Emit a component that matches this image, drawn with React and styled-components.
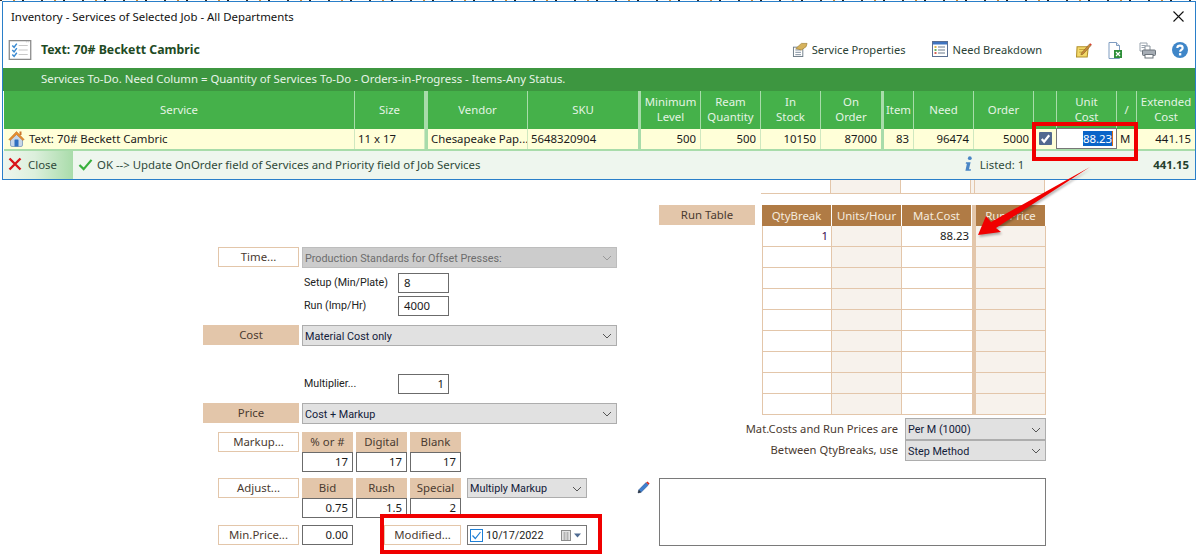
import React from 'react'
import styled, { createGlobalStyle, css } from 'styled-components'

const BEIGE = '#e3c6aa'
const UI_FONT = '"Noto Sans", "Open Sans", "Liberation Sans", sans-serif'
const CONTROL_FONT = 'Roboto, "Noto Sans", "Liberation Sans", sans-serif'

// the font sits a pixel low in its line box, this lifts centered text back up
const liftText = css`
  box-sizing: border-box;
  padding-bottom: 2px;
`

const GlobalStyle = createGlobalStyle`
  html, body {
    margin: 0;
    padding: 0;
    background: #fff;
  }
  body {
    font-family: ${UI_FONT};
    font-size: 11.4px;
    color: #222;
  }
`

const Page = styled.div`
  position: relative;
  width: 1198px;
  height: 558px;
  overflow: hidden;
  background: #fff;
`

const BackdropStrip = styled.div`
  height: 1px;
  background: repeating-linear-gradient(90deg, #333 0 2px, #fff 2px 13px, #c98a3a 13px 15px, #fff 15px 22px, #222 22px 24px, #fff 24px 41px);
`

const Dialog = styled.div`
  margin: 0 2px;
  height: 179px;
  box-sizing: border-box;
  border: 1px solid #2a7fc9;
  background: #fff;
  display: flex;
  flex-direction: column;
`

const TitleBar = styled.div`
  height: 30px;
  flex: none;
  display: flex;
  align-items: center;
  justify-content: space-between;
  box-sizing: border-box;
  padding: 0 11px 2px 8px;
  color: #111;
`

const Toolbar = styled.div`
  height: 36px;
  flex: none;
  display: flex;
  align-items: center;
  padding: 0 7px 0 5px;
`

const JobTitle = styled.div`
  margin-left: 9px;
  flex: 1;
  font-weight: 700;
  font-size: 12.3px;
  color: #1e4a24;
  ${liftText}
`

const ToolAction = styled.div`
  display: flex;
  align-items: center;
  gap: 4px;
  margin-right: ${props => props.$gap || 0}px;
  color: #2b3f35;
  font-size: 11.1px;
  ${liftText}
`

const ToolIcons = styled.div`
  display: flex;
  align-items: center;
  gap: 16px;
  margin-left: 34px;
`

const NoticeBand = styled.div`
  height: 23px;
  flex: none;
  background: #3d9640;
  color: #e8f5e8;
  padding-left: 38px;
  line-height: 21px;
`

const GRID_COLUMNS = '351px 70px 3px 100px 110px 3px 60px 60px 60px 60px 3px 30px 60px 60px 23px 60px 20px 1fr'

const HeaderRow = styled.div`
  height: 38px;
  flex: none;
  margin-left: 1px;
  display: grid;
  grid-template-columns: ${GRID_COLUMNS};
  background: #45b14a;
`

const HeaderCell = styled.div`
  display: flex;
  align-items: center;
  justify-content: center;
  text-align: center;
  line-height: 15px;
  color: #e4f4e4;
  border-right: ${props => (props.$plain ? 0 : '1px solid #a8dcaa')};
  ${liftText}
`

const ThickDivider = styled.div`
  background: #a8dcaa;
`

const DataRow = styled.div`
  height: 20px;
  flex: none;
  margin-left: 1px;
  display: grid;
  grid-template-columns: ${GRID_COLUMNS};
  background: #ffffd8;
  border-bottom: 2px solid #a8dcaa;
`

const DataCell = styled.div`
  display: flex;
  align-items: center;
  justify-content: ${props => (props.$right ? 'flex-end' : 'flex-start')};
  gap: 4px;
  box-sizing: border-box;
  padding: 0 4px 2px ${props => props.$indent || 3}px;
  border-right: ${props => (props.$plain ? 0 : '1px solid #cfe8c0')};
  white-space: nowrap;
  overflow: hidden;
  color: #1a1a1a;
`

const CostInput = styled.div`
  margin: -1px 0 0 -1px;
  display: flex;
  justify-content: flex-end;
  align-items: center;
  border: 1px solid #777;
  background: #fff;
  padding-right: 3px;
  height: 21px;
  box-sizing: border-box;
`

const SelectedText = styled.span`
  background: #0a64c8;
  color: #fff;
  border-right: 1px solid #d86a10;
`

const Footer = styled.div`
  flex: 1;
  display: flex;
  align-items: center;
  background: #eef6ee;
  color: #2f4a3a;
`

const CloseAction = styled.div`
  width: 70px;
  height: 100%;
  display: flex;
  align-items: center;
  gap: 6px;
  box-sizing: border-box;
  padding: 0 0 2px 5px;
  background: linear-gradient(90deg, #eef6ee 0%, #dcefdc 45%, #a9dcaa 100%);
`

const OkAction = styled.div`
  flex: 1;
  display: flex;
  align-items: center;
  gap: 4px;
  box-sizing: border-box;
  padding: 0 0 2px 5px;
`

const Listed = styled.div`
  display: flex;
  align-items: center;
  gap: 7px;
  margin-right: 129px;
  ${liftText}
`

const FooterTotal = styled.div`
  font-weight: 700;
  margin-right: 6px;
  color: #24402c;
  ${liftText}
`

const Body = styled.div`
  display: flex;
  padding-left: 203px;
`

const LeftForm = styled.div`
  width: 414px;
  padding-top: 67px;
  display: flex;
  flex-direction: column;
`

const RightPane = styled.div`
  margin-left: 42px;
  width: 387px;
  display: flex;
  flex-direction: column;
`

const FormRow = styled.div`
  display: flex;
  align-items: flex-start;
  margin-top: ${props => props.$top || 0}px;
  padding-left: ${props => props.$indent || 0}px;
`

const OutlineLabel = styled.div`
  width: ${props => props.$width || 81}px;
  height: 20px;
  flex: none;
  border: 1px solid ${BEIGE};
  background: #fff;
  display: flex;
  align-items: center;
  justify-content: center;
  color: #4a3a30;
  margin-right: ${props => props.$after ?? 3}px;
  ${liftText}
`

const FilledLabel = styled.div`
  width: 96px;
  height: 20px;
  flex: none;
  background: ${BEIGE};
  display: flex;
  align-items: center;
  justify-content: center;
  color: #4a3a30;
  ${liftText}
`

const SelectBox = styled.div`
  width: ${props => props.$width || 315}px;
  height: ${props => props.$height || 21}px;
  margin-left: ${props => props.$left || 0}px;
  flex: none;
  box-sizing: border-box;
  border: 1px solid ${props => (props.$disabled ? '#bdbdbd' : '#adadad')};
  background: ${props => (props.$disabled ? '#cccccc' : '#e1e1e1')};
  color: ${props => (props.$disabled ? '#6d6d6d' : '#12203a')};
  display: flex;
  align-items: center;
  justify-content: space-between;
  padding: 1px 4px 0 2px;
  white-space: nowrap;
  font-family: ${CONTROL_FONT};
  font-size: 10.8px;
`

const FieldText = styled.div`
  width: 96px;
  box-sizing: border-box;
  padding-left: 2px;
  height: 20px;
  line-height: 20px;
  flex: none;
  white-space: nowrap;
  color: #222;
  font-family: ${CONTROL_FONT};
  font-size: 10.7px;
`

const NumberBox = styled.div`
  width: ${props => props.$width || 51}px;
  height: 20px;
  flex: none;
  box-sizing: border-box;
  border: 1px solid #6b6b6b;
  background: #fff;
  display: flex;
  align-items: center;
  justify-content: ${props => (props.$left ? 'flex-start' : 'flex-end')};
  padding: 0 4px 2px 5px;
  color: #1a1a1a;
`

const StackCols = styled.div`
  display: flex;
  gap: 3px;
`

const Stack = styled.div`
  width: 51px;
  display: flex;
  flex-direction: column;
`

const StackHead = styled.div`
  height: 20px;
  background: ${BEIGE};
  display: flex;
  align-items: center;
  justify-content: center;
  color: #4a3a30;
  ${liftText}
`

const DateBox = styled.div`
  width: 120px;
  height: 20px;
  margin-left: 6px;
  flex: none;
  box-sizing: border-box;
  border: 1px solid #777;
  background: #fff;
  display: flex;
  align-items: center;
  padding: 0 4px 0 2px;
  gap: 3px;
  color: #1a1a1a;
`

const DateValue = styled.span`
  flex: 1;
  font-family: ${CONTROL_FONT};
  font-size: 10.8px;
`

const PrevTable = styled.div`
  margin-left: 102px;
  width: 284px;
  height: 14px;
  box-sizing: border-box;
  display: grid;
  grid-template-columns: 70px 70px 70px 4px 1fr;
  border-bottom: 1px solid ${BEIGE};
`

const PrevCell = styled.div`
  box-sizing: border-box;
  background: ${props => (props.$tint ? '#f7f2ec' : '#fff')};
  border-right: 1px solid ${BEIGE};
`

const RunBlock = styled.div`
  display: flex;
  margin-top: 11px;
  align-items: flex-start;
`

const RunTable = styled.div`
  margin-left: 7px;
  width: 284px;
  display: grid;
  grid-template-columns: 70px 70px 70px 4px 70px;
  grid-auto-rows: 21px;
`

const RunHead = styled.div`
  height: 22px;
  background: #b07b45;
  color: #f5ebdf;
  display: flex;
  align-items: center;
  justify-content: center;
  border-right: 1px solid #fff;
  ${liftText}
`

const RunGap = styled.div`
  background: ${BEIGE};
`

const RunCell = styled.div`
  box-sizing: border-box;
  background: ${props => (props.$tint ? '#f7f2ec' : '#fff')};
  border-left: ${props => (props.$first ? `1px solid ${BEIGE}` : 0)};
  border-right: ${props => (props.$tight ? 0 : `1px solid ${BEIGE}`)};
  border-bottom: 1px solid ${BEIGE};
  display: flex;
  align-items: center;
  justify-content: flex-end;
  padding: 0 3px 2px 0;
  color: ${props => props.color || '#1a1a1a'};
`

const OptionRow = styled.div`
  display: flex;
  justify-content: flex-end;
  align-items: center;
  gap: 7px;
  margin-top: ${props => props.$top || 0}px;
  color: #4a3a30;
`

const OptionLabel = styled.span`
  font-size: 11.2px;
  ${liftText}
`

const NotesRow = styled.div`
  position: relative;
  margin-top: 17px;
`

const PencilSlot = styled.div`
  position: absolute;
  left: -22px;
  top: 3px;
`

const Notes = styled.div`
  height: 68px;
  box-sizing: border-box;
  border: 1px solid #7a7a7a;
  background: #fff;
`

const Callout = styled.div`
  position: absolute;
  left: ${props => props.$x}px;
  top: ${props => props.$y}px;
  width: ${props => props.$w}px;
  height: ${props => props.$h}px;
  box-sizing: border-box;
  border: 4px solid #f00000;
  pointer-events: none;
`

const ArrowLayer = styled.svg`
  position: absolute;
  left: 0;
  top: 0;
  pointer-events: none;
  filter: drop-shadow(1px 2px 1px rgba(0, 0, 0, 0.3));
`

const Icon = styled.svg`
  flex: none;
  display: block;
`

const Chevron = ({ color = '#555' }) => (
  <Icon width="10" height="6" viewBox="0 0 10 6">
    <path d="M1 1l4 4 4-4" fill="none" stroke={color} strokeWidth="1" />
  </Icon>
)

const ChecklistIcon = () => (
  <Icon width="24" height="20" viewBox="0 0 25 22">
    <rect x="0.7" y="0.7" width="23.6" height="20.6" fill="#fff" stroke="#8a8a8a" strokeWidth="1.4" />
    <path d="M19 2h4" stroke="#bbb" strokeDasharray="1 1" />
    <path d="M11 6h10M11 11h10M11 16h10" stroke="#c8c8c8" strokeWidth="1.2" />
    <path d="M4 6l2 2 3-4M4 11l2 2 3-4M4 16l2 2 3-4" fill="none" stroke="#3b8ad0" strokeWidth="1.6" />
  </Icon>
)

const HouseIcon = () => (
  <Icon width="17" height="17" viewBox="0 0 17 17">
    <path d="M2.5 8.5L8.5 3l6 5.5V15a1.5 1.5 0 0 1-1.5 1.5H4A1.5 1.5 0 0 1 2.5 15z" fill="#c7d6e8" stroke="#6c8db5" strokeWidth="0.7" />
    <path d="M.8 9.5L8.5 1.5l7.7 8-1.6.8L8.5 4.5 2.4 10.3z" fill="#e8902f" stroke="#b5651a" strokeWidth="0.5" />
    <rect x="11.5" y="1.5" width="2" height="3.5" fill="#c9762a" />
    <rect x="6.5" y="9.5" width="4" height="7" rx="0.6" fill="#2f6fc0" />
  </Icon>
)

const CloseX = () => (
  <Icon width="14" height="14" viewBox="0 0 14 14">
    <path d="M1.5 1.5l11 11M12.5 1.5l-11 11" stroke="#d8141a" strokeWidth="2.4" />
  </Icon>
)

const GreenCheck = () => (
  <Icon width="15" height="13" viewBox="0 0 16 14">
    <path d="M1.5 7.5l4.5 4.5L14.5 2" fill="none" stroke="#38b03c" strokeWidth="2.4" />
  </Icon>
)

const InfoIcon = () => (
  <Icon width="9" height="16" viewBox="0 0 9 16">
    <circle cx="5.8" cy="2.2" r="1.9" fill="#4a86c5" />
    <path d="M2 6.2h4.6L5 13.2h2l-.3 1.6H1.4l1.5-7H1.7z" fill="#4a86c5" />
  </Icon>
)

const PropertiesIcon = () => (
  <Icon width="16" height="15" viewBox="0 0 17 16">
    <rect x="1.5" y="5.5" width="10" height="10" fill="#fff" stroke="#6c7a86" />
    <path d="M3.5 8.5h6M3.5 11h6M3.5 13.5h6" stroke="#7a8a9a" />
    <path d="M4 7l6-5.5h6L15 5 10 8.5z" fill="#d6b25c" stroke="#9c7b2e" strokeWidth="0.7" />
  </Icon>
)

const BreakdownIcon = () => (
  <Icon width="16" height="16" viewBox="0 0 16 16">
    <rect x="0.5" y="0.5" width="15" height="15" fill="#fff" stroke="#5a6f92" />
    <rect x="1" y="1" width="14" height="2.5" fill="#3f74c0" />
    <path d="M2.5 6h2" stroke="#d7a520" strokeWidth="1.6" />
    <path d="M2.5 9h2" stroke="#3ca03c" strokeWidth="1.6" />
    <path d="M2.5 12h2" stroke="#c83a2a" strokeWidth="1.6" />
    <path d="M6 6h7M6 9h7M6 12h7" stroke="#6a7a8c" />
  </Icon>
)

const NoteIcon = () => (
  <Icon width="16" height="16" viewBox="0 0 15 15">
    <path d="M1 4.5h10.5l-1 9.5H.5z" fill="#f4d96a" stroke="#b08f2a" />
    <path d="M3 7h6M3 9.5h5" stroke="#b08f2a" strokeWidth="0.7" />
    <path d="M5 10.5L12.5 2l1.6 1.3L6.5 11.5 4.6 12z" fill="#c98a3a" stroke="#7a5320" strokeWidth="0.5" />
    <path d="M12.5 2l.8-.9 1.5 1.3-.7.9z" fill="#d83a2a" />
  </Icon>
)

const ExcelIcon = () => (
  <Icon width="15" height="17" viewBox="0 0 14 17">
    <path d="M.5.5H8l3 3v13H.5z" fill="#fff" stroke="#7f9cc0" />
    <path d="M8 .5v3h3" fill="#dfe9f5" stroke="#7f9cc0" />
    <rect x="5.5" y="8" width="8" height="8" fill="#2f8f3a" />
    <path d="M7.5 10l4 4M11.5 10l-4 4" stroke="#fff" strokeWidth="1.2" />
  </Icon>
)

const PrinterIcon = () => (
  <Icon width="17" height="17" viewBox="0 0 17 16">
    <path d="M1 .5h7v8H1z" fill="#fff" stroke="#9aa4ae" />
    <path d="M2.5 3h4M2.5 5h4" stroke="#9aa4ae" />
    <path d="M6 3.5h5v5H6z" fill="#fff" stroke="#8a949e" />
    <rect x="3.5" y="7.5" width="13" height="5.5" rx="1" fill="#a6adb5" stroke="#6c747c" />
    <rect x="6" y="12" width="8" height="3.5" fill="#fff" stroke="#6c747c" />
  </Icon>
)

const HelpIcon = () => (
  <Icon width="16" height="16" viewBox="0 0 15 15">
    <circle cx="7.5" cy="7.5" r="7.5" fill="#3f86c8" />
    <path d="M5 5.6c0-3 5-3 5 0 0 1.8-2.4 1.8-2.4 3.6" fill="none" stroke="#fff" strokeWidth="2" />
    <rect x="6.5" y="10.4" width="2.2" height="2.2" fill="#fff" />
  </Icon>
)

const RowCheckbox = () => (
  <Icon width="13" height="13" viewBox="0 0 14 14">
    <rect width="14" height="14" rx="1" fill="#52698f" />
    <path d="M3 7.5l2.5 3L11 3.5" fill="none" stroke="#fff" strokeWidth="2.4" />
  </Icon>
)

const DateCheckbox = () => (
  <Icon width="13" height="13" viewBox="0 0 13 13">
    <rect x="0.5" y="0.5" width="12" height="12" fill="#fff" stroke="#1e7fd6" />
    <path d="M2.5 6.5l2.8 3L10.5 3" fill="none" stroke="#1e7fd6" strokeWidth="1.2" />
  </Icon>
)

const CalendarDrop = () => (
  <Icon width="21" height="11" viewBox="0 0 21 11">
    <rect x="0.5" y="0.5" width="9" height="10" fill="#e4e4e4" stroke="#8c8c8c" />
    <path d="M2 3h6M2 5h6M2 7h6M2 9h6M3.5 2v8M6.5 2v8" stroke="#a8a8a8" strokeWidth="0.7" />
    <path d="M13 3.5h7L16.5 7.5z" fill="#4f6b92" />
  </Icon>
)

const PencilIcon = () => (
  <Icon width="13" height="13" viewBox="0 0 13 13">
    <path d="M1 12l.8-3.2L9 1.6l2.4 2.4L4.2 11.2z" fill="#3f7fd0" stroke="#2c4f80" strokeWidth="0.5" />
    <path d="M9.2 1.4L10.4.4l2.2 2.2-1.1 1.2z" fill="#d9261c" />
    <path d="M1 12l.8-3.2 2.4 2.4z" fill="#333" />
  </Icon>
)

const CrossIcon = () => (
  <Icon width="11" height="11" viewBox="0 0 11 11">
    <path d="M.5.5l10 10M10.5.5l-10 10" stroke="#111" strokeWidth="1.1" />
  </Icon>
)

const serviceColumns = [
  { label: 'Service' },
  { label: 'Size' },
  { thick: true },
  { label: 'Vendor' },
  { label: 'SKU', plain: true },
  { thick: true },
  { label: ['Minimum', 'Level'] },
  { label: ['Ream', 'Quantity'] },
  { label: ['In', 'Stock'] },
  { label: ['On', 'Order'], plain: true },
  { thick: true },
  { label: 'Item' },
  { label: 'Need' },
  { label: 'Order' },
  { label: '' },
  { label: ['Unit', 'Cost'] },
  { label: '/' },
  { label: ['Extended', 'Cost'], plain: true },
]

const runRows = [
  ['1', '88.23'],
  ['', ''],
  ['', ''],
  ['', ''],
  ['', ''],
  ['', ''],
  ['', ''],
  ['', ''],
  ['', ''],
]

const App = () => (
  <Page>
    <GlobalStyle />
    <BackdropStrip />
    <Dialog>
      <TitleBar>
        <span>Inventory - Services of Selected Job - All Departments</span>
        <CrossIcon />
      </TitleBar>
      <Toolbar>
        <ChecklistIcon />
        <JobTitle>Text: 70# Beckett Cambric</JobTitle>
        <ToolAction $gap={27}>
          <PropertiesIcon />
          Service Properties
        </ToolAction>
        <ToolAction>
          <BreakdownIcon />
          Need Breakdown
        </ToolAction>
        <ToolIcons>
          <NoteIcon />
          <ExcelIcon />
          <PrinterIcon />
          <HelpIcon />
        </ToolIcons>
      </Toolbar>
      <NoticeBand>
        Services To-Do. Need Column = Quantity of Services To-Do - Orders-in-Progress - Items-Any Status.
      </NoticeBand>
      <HeaderRow>
        {serviceColumns.map((col, i) =>
          col.thick ? (
            <ThickDivider key={i} />
          ) : (
            <HeaderCell key={i} $plain={col.plain}>
              {Array.isArray(col.label) ? (
                <span>
                  {col.label[0]}
                  <br />
                  {col.label[1]}
                </span>
              ) : (
                col.label
              )}
            </HeaderCell>
          ),
        )}
      </HeaderRow>
      <DataRow>
        <DataCell $indent={4}>
          <HouseIcon />
          Text: 70# Beckett Cambric
        </DataCell>
        <DataCell>11 x 17</DataCell>
        <ThickDivider />
        <DataCell>Chesapeake Pap...</DataCell>
        <DataCell $plain>5648320904</DataCell>
        <ThickDivider />
        <DataCell $right>500</DataCell>
        <DataCell $right>500</DataCell>
        <DataCell $right>10150</DataCell>
        <DataCell $right $plain>87000</DataCell>
        <ThickDivider />
        <DataCell $right>83</DataCell>
        <DataCell $right>96474</DataCell>
        <DataCell $right>5000</DataCell>
        <DataCell $plain $indent={5}>
          <RowCheckbox />
        </DataCell>
        <CostInput>
          <SelectedText>88.23</SelectedText>
        </CostInput>
        <DataCell>M</DataCell>
        <DataCell $right $plain>441.15</DataCell>
      </DataRow>
      <Footer>
        <CloseAction>
          <CloseX />
          Close
        </CloseAction>
        <OkAction>
          <GreenCheck />
          OK --&gt; Update OnOrder field of Services and Priority field of Job Services
        </OkAction>
        <Listed>
          <InfoIcon />
          Listed: 1
        </Listed>
        <FooterTotal>441.15</FooterTotal>
      </Footer>
    </Dialog>
    <Body>
      <LeftForm>
        <FormRow $indent={15}>
          <OutlineLabel>Time...</OutlineLabel>
          <SelectBox $disabled>
            Production Standards for Offset Presses:
            <Chevron color="#999" />
          </SelectBox>
        </FormRow>
        <FormRow $top={5} $indent={99}>
          <FieldText>Setup (Min/Plate)</FieldText>
          <NumberBox $left>8</NumberBox>
        </FormRow>
        <FormRow $top={3} $indent={99}>
          <FieldText>Run (Imp/Hr)</FieldText>
          <NumberBox $left>4000</NumberBox>
        </FormRow>
        <FormRow $top={9}>
          <FilledLabel>Cost</FilledLabel>
          <SelectBox $left={3}>
            Material Cost only
            <Chevron />
          </SelectBox>
        </FormRow>
        <FormRow $top={28} $indent={99}>
          <FieldText>Multiplier...</FieldText>
          <NumberBox>1</NumberBox>
        </FormRow>
        <FormRow $top={9}>
          <FilledLabel>Price</FilledLabel>
          <SelectBox $left={3}>
            Cost + Markup
            <Chevron />
          </SelectBox>
        </FormRow>
        <FormRow $top={8} $indent={15}>
          <OutlineLabel>Markup...</OutlineLabel>
          <StackCols>
            <Stack>
              <StackHead>% or #</StackHead>
              <NumberBox>17</NumberBox>
            </Stack>
            <Stack>
              <StackHead>Digital</StackHead>
              <NumberBox>17</NumberBox>
            </Stack>
            <Stack>
              <StackHead>Blank</StackHead>
              <NumberBox>17</NumberBox>
            </Stack>
          </StackCols>
        </FormRow>
        <FormRow $top={6} $indent={15}>
          <OutlineLabel>Adjust...</OutlineLabel>
          <StackCols>
            <Stack>
              <StackHead>Bid</StackHead>
              <NumberBox>0.75</NumberBox>
            </Stack>
            <Stack>
              <StackHead>Rush</StackHead>
              <NumberBox>1.5</NumberBox>
            </Stack>
            <Stack>
              <StackHead>Special</StackHead>
              <NumberBox>2</NumberBox>
            </Stack>
          </StackCols>
          <SelectBox $width={120} $height={20} $left={6}>
            Multiply Markup
            <Chevron />
          </SelectBox>
        </FormRow>
        <FormRow $top={7} $indent={15}>
          <OutlineLabel>Min.Price...</OutlineLabel>
          <NumberBox>0.00</NumberBox>
          <FormRow $indent={31}>
            <OutlineLabel $width={77} $after={0}>Modified...</OutlineLabel>
            <DateBox>
              <DateCheckbox />
              <DateValue>10/17/2022</DateValue>
              <CalendarDrop />
            </DateBox>
          </FormRow>
        </FormRow>
      </LeftForm>
      <RightPane>
        <PrevTable>
          <PrevCell />
          <PrevCell $tint />
          <PrevCell />
          <PrevCell $tint />
          <PrevCell $tint />
        </PrevTable>
        <RunBlock>
          <FilledLabel>Run Table</FilledLabel>
          <RunTable>
            <RunHead>QtyBreak</RunHead>
            <RunHead>Units/Hour</RunHead>
            <RunHead>Mat.Cost</RunHead>
            <RunGap />
            <RunHead>Run Price</RunHead>
            {runRows.map((row, i) => (
              <React.Fragment key={i}>
                <RunCell $first color="#3a0a50">{row[0]}</RunCell>
                <RunCell $tint />
                <RunCell $tight>{row[1]}</RunCell>
                <RunGap />
                <RunCell $tint />
              </React.Fragment>
            ))}
          </RunTable>
        </RunBlock>
        <OptionRow $top={3}>
          <OptionLabel>Mat.Costs and Run Prices are</OptionLabel>
          <SelectBox $width={141} $height={22}>
            Per M (1000)
            <Chevron />
          </SelectBox>
        </OptionRow>
        <OptionRow>
          <OptionLabel>Between QtyBreaks, use</OptionLabel>
          <SelectBox $width={141}>
            Step Method
            <Chevron />
          </SelectBox>
        </OptionRow>
        <NotesRow>
          <PencilSlot>
            <PencilIcon />
          </PencilSlot>
          <Notes />
        </NotesRow>
      </RightPane>
    </Body>
    <Callout $x={1032} $y={122} $w={106} $h={39} />
    <Callout $x={380} $y={514} $w={222} $h={40} />
    <ArrowLayer width="1198" height="558" viewBox="0 0 1198 558">
      <path d="M1090 167L996 228L1001 232L978 235L986 216L991 222z" fill="#f00000" />
    </ArrowLayer>
  </Page>
)

export default App
